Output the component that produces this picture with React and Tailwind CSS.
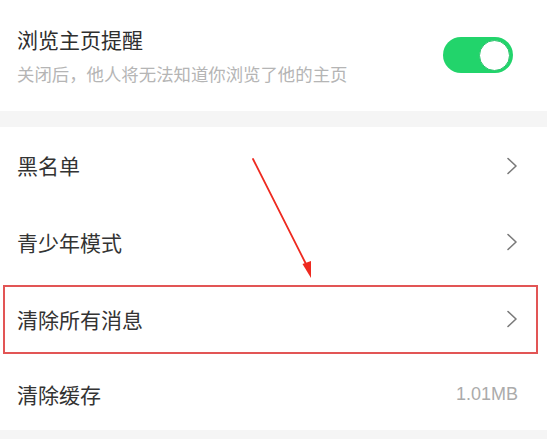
import React from 'react';

const font = { fontFamily: '"Noto Sans CJK SC", "Noto Sans", sans-serif' };

const Chevron = () => (
  <svg width="12" height="18" viewBox="0 0 12 18" fill="none">
    <path d="M2 1.5 L10 9 L2 16.5" stroke="#7a7a7a" strokeWidth="1.6" strokeLinecap="round" strokeLinejoin="round" />
  </svg>
);

const Row = ({ label, height, right }) => (
  <div className={`flex items-center justify-between pl-[17px] pr-[29px] ${height}`}>
    <span className="text-[21px] leading-none text-[#333]">{label}</span>
    {right}
  </div>
);

export default function App() {
  return (
    <div className="relative w-[547px] h-[439px] bg-white overflow-hidden" style={font}>
      {/* Top setting */}
      <div className="flex items-center justify-between h-[111px] pl-[17px] pr-[34px]">
        <div className="flex flex-col">
          <span className="text-[21px] leading-none text-[#2e2e2e] mt-[1px]">浏览主页提醒</span>
          <span className="text-[17.4px] leading-none text-[#b5b5b5] mt-[15px]">关闭后，他人将无法知道你浏览了他的主页</span>
        </div>
        <div className="w-[70px] h-[36px] rounded-full bg-[#22d46b] flex items-center justify-end pr-[3px] -mt-[1px]">
          <div className="w-[31px] h-[31px] rounded-full bg-white border border-[#2fc46f]" />
        </div>
      </div>

      <div className="h-[16px] bg-[#f5f5f5]" />

      <Row label="黑名单" height="h-[77px]" right={<Chevron />} />
      <Row label="青少年模式" height="h-[76px]" right={<Chevron />} />
      <Row label="清除所有消息" height="h-[78px]" right={<Chevron />} />
      <Row
        label="清除缓存"
        height="h-[72px]"
        right={<span className="text-[18px] leading-none text-[#ababab]" style={{ fontFamily: '"Liberation Sans", sans-serif' }}>1.01MB</span>}
      />

      <div className="h-[9px] bg-[#f5f5f5]" />

      {/* Red annotation box */}
      <div className="absolute left-[3px] top-[285px] w-[535px] h-[69px] border-2 border-[#e25555]" />

      {/* Red arrow */}
      <svg className="absolute left-0 top-0" width="547" height="439" viewBox="0 0 547 439">
        <line x1="253" y1="159" x2="307" y2="266" stroke="#ee2a20" strokeWidth="1.8" strokeLinecap="round" />
        <path d="M311 278 L302.5 264 L311 261 Z" fill="#ee2a20" />
      </svg>
    </div>
  );
}
